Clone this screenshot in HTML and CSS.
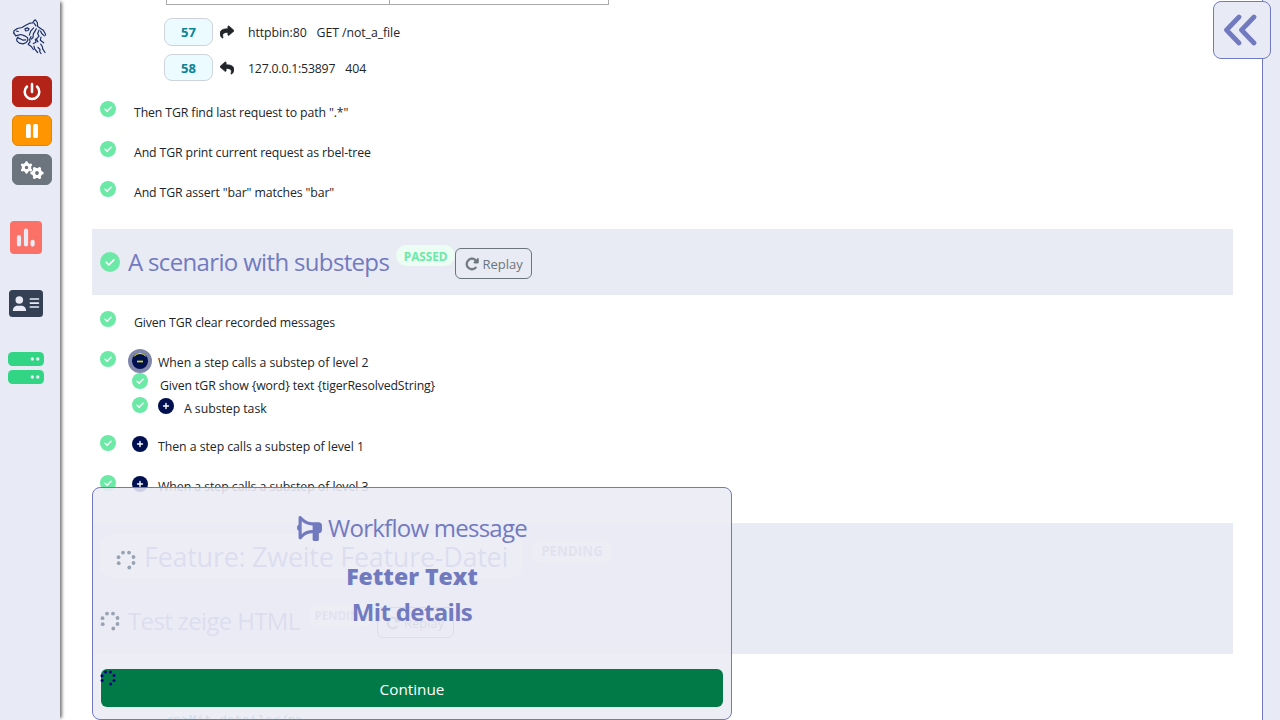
FILE: index.html
```html
<!DOCTYPE html>
<html lang="en">
<head>
<meta charset="utf-8">
<title>Workflow UI</title>
<link rel="stylesheet" href="styles.css">
</head>
<body>
<svg class="defs" width="0" height="0">
  <symbol id="check" viewBox="0 0 16 16"><circle cx="8" cy="8" r="8" fill="#6ce9a6"/><path d="M5 8.2l2.1 2.1 4-4" fill="none" stroke="#fff" stroke-width="1.4" stroke-linecap="round" stroke-linejoin="round"/></symbol>
  <symbol id="plus" viewBox="0 0 16 16"><circle cx="8" cy="8" r="8" fill="#000f50"/><path d="M5.500 8h5M8 5.500v5" stroke="#fff" stroke-width="1.4" stroke-linecap="round"/></symbol>
  <symbol id="share" viewBox="0 0 512 512"><path d="M503.691 189.836L327.687 37.851C312.281 24.546 288 35.347 288 56.015v80.053C127.371 137.907 0 170.1 0 322.326c0 61.441 39.581 122.309 83.333 154.132 13.653 9.931 33.111-2.533 28.077-18.631C66.066 312.814 132.917 274.316 288 272.085V360c0 20.7 24.3 31.453 39.687 18.164l176.004-152c11.071-9.562 11.086-26.753 0-36.328z" fill="currentColor" stroke="currentColor" stroke-width="24"/></symbol>
  <symbol id="redo" viewBox="0 0 512 512"><path d="M463.5 224H472c13.3 0 24-10.7 24-24V72c0-9.7-5.8-18.5-14.8-22.2s-19.3-1.7-26.2 5.2L413.4 96.6c-87.6-86.5-228.7-86.2-315.8 1c-87.5 87.5-87.5 229.3 0 316.8s229.3 87.5 316.8 0c12.5-12.5 12.5-32.8 0-45.3s-32.8-12.5-45.3 0c-62.5 62.5-163.8 62.5-226.3 0s-62.5-163.8 0-226.3c62.2-62.2 162.7-62.5 225.3-1L327 183c-6.9 6.9-8.9 17.2-5.2 26.2s12.5 14.8 22.2 14.8H463.5z" fill="currentColor" stroke="currentColor" stroke-width="16"/></symbol>
  <symbol id="spin" viewBox="0 0 20 20"><g fill="currentColor"><circle cx="7" cy="2.6" r="1.9"/><circle cx="13" cy="2.6" r="1.9"/><circle cx="2.5" cy="7.2" r="1.9"/><circle cx="17.5" cy="7" r="1.9"/><circle cx="2.7" cy="13.2" r="1.9"/><circle cx="17.5" cy="13" r="1.9"/><circle cx="13.3" cy="17.5" r="1.9"/></g></symbol>
  <symbol id="gear" viewBox="-10 -10 20 20"><circle r="5" fill="none" stroke="#fff" stroke-width="4.6"/><g stroke="#fff" stroke-width="4.4" stroke-linecap="round"><path d="M0-7.4V-6M0 7.4V6M6.4-3.7L5.2-3M-6.4 3.7L-5.2 3M6.4 3.7L5.2 3M-6.4-3.7L-5.2-3"/></g></symbol>
</svg>

<div class="app">
  <nav class="sidebar">
    <svg class="logo" viewBox="36 56 105 110" fill="none" stroke="#1d3068" stroke-width="3.6" stroke-linejoin="round" stroke-linecap="round">
      <path d="M41 101l1-7 10-7 14-3 10-6 13-7 9-1 4-6 4-3 6 8 1 12 12 8 5 3 5 9 2 6"/>
      <path d="M102 71l6 8M42 101l5 8 8-2 8-2 11 4 8 5 2 7-5 8-10 4-11-2-7-6-1-6 4-6"/>
      <path d="M54 115l7 3 8 4 8-1M50 95l5 1"/>
      <path d="M75 88l7-3 5 3-3 5-7 1-2-4M101 85l-9 10-4 12M109 88l-9 15-1 11-5 5M117 92l-4 10 4 8-8 9 5 8M122 95l3 7 8 7M93 111l-4 9 1 7-5 7M106 119l2 9-8 4M123 113l-2 9 10 8"/>
      <path d="M85 135l9 6 6 9M102 140l2 8 9 11M114 144l6 6-1 6 4 6M122 134l5 7 1 7 7 11"/>
    </svg>
    <button class="tool tool-quit"><svg width="20" height="20" viewBox="0 0 20 20"><path d="M5 4.5a7.3 7.3 0 1 0 10 0M10 1.9v8" fill="none" stroke="#fff" stroke-width="2.5" stroke-linecap="round"/></svg></button>
    <button class="tool tool-pause"><svg width="12" height="14" viewBox="0 0 12 14"><rect width="4.8" height="14" rx="1.6" fill="#fff"/><rect x="7.2" width="4.8" height="14" rx="1.6" fill="#fff"/></svg></button>
    <button class="tool tool-gears"><svg width="24" height="20" viewBox="0 0 24 20"><use href="#gear" x="0" y="1" width="13" height="13"/><use href="#gear" x="10" y="6" width="14" height="14" transform="rotate(30 17 13)"/></svg></button>
    <svg class="nav-chart" width="32" height="33" viewBox="0 0 32 33"><rect width="32" height="33" rx="4" fill="#fb7168"/><path d="M9 16v7.5M16 9.5v14M22.6 20.8v2.8" stroke="#e8ebf5" stroke-width="4.2" stroke-linecap="round"/></svg>
    <svg class="nav-card" width="34" height="27" viewBox="0 0 34 27"><rect width="34" height="27" rx="3.5" fill="#344054"/><g fill="#e8ebf5"><circle cx="10.3" cy="10" r="3.8"/><path d="M3.8 21c0-3.5 2.2-5.3 5-5.3h3.3c2.8 0 5 1.8 5 5.3z"/></g><path d="M21.3 9h8.2M21.3 13.1h8.2M21.3 17h8.2" stroke="#e8ebf5" stroke-width="1.6" stroke-linecap="round"/></svg>
    <svg class="nav-server" width="36" height="32" viewBox="0 0 36 32"><rect width="36" height="14" rx="4.5" fill="#32d583"/><rect y="18" width="36" height="14" rx="4.5" fill="#32d583"/><g fill="#e8ebf5"><circle cx="24.3" cy="7" r="1.7"/><circle cx="29.8" cy="7" r="1.7"/><circle cx="24.3" cy="25" r="1.7"/><circle cx="29.8" cy="25" r="1.7"/></g></svg>
  </nav>

  <main class="content">
    <div class="table-end"><span></span></div>
    <div class="message first"><b class="seq">57</b><svg class="dir"><use href="#share"/></svg><span class="host">httpbin:80</span><span class="req">GET /not_a_file</span></div>
    <div class="message"><b class="seq">58</b><svg class="dir reply"><use href="#share"/></svg><span class="host host-ip">127.0.0.1:53897</span><span>404</span></div>

    <div class="steps">
      <div class="step"><svg class="dot"><use href="#check"/></svg><span>Then TGR find last request to path ".*"</span></div>
      <div class="step"><svg class="dot"><use href="#check"/></svg><span>And TGR print current request as rbel-tree</span></div>
      <div class="step"><svg class="dot"><use href="#check"/></svg><span>And TGR assert "bar" matches "bar"</span></div>
    </div>

    <section class="scenario">
      <svg class="dot-lg"><use href="#check"/></svg>
      <h2 class="scenario-title">A scenario with substeps</h2>
      <b class="badge">PASSED</b>
      <button class="replay"><svg width="14" height="14"><use href="#redo"/></svg><span>Replay</span></button>
    </section>

    <div class="steps after">
      <div class="step"><svg class="dot"><use href="#check"/></svg><span>Given TGR clear recorded messages</span></div>
      <div class="step parent"><svg class="dot"><use href="#check"/></svg><svg class="toggle open" viewBox="0 0 24 24"><circle cx="12" cy="12" r="12" fill="#8087ab"/><circle cx="12" cy="12" r="8" fill="#000f50"/><path d="M6.2 7.2a7.5 7.5 0 0 1 11.6 0" stroke="#ff0" fill="none"/><path d="M9 12.5h6" stroke="#d8d820" stroke-width="1.7"/></svg><span>When a step calls a substep of level 2</span></div>
      <div class="substep"><svg class="dot"><use href="#check"/></svg><span>Given tGR show {word} text {tigerResolvedString}</span></div>
      <div class="substep nested"><svg class="dot"><use href="#check"/></svg><svg class="toggle"><use href="#plus"/></svg><span>A substep task</span></div>
      <div class="step parent"><svg class="dot"><use href="#check"/></svg><svg class="toggle"><use href="#plus"/></svg><span>Then a step calls a substep of level 1</span></div>
      <div class="step parent"><svg class="dot"><use href="#check"/></svg><svg class="toggle"><use href="#plus"/></svg><span>When a step calls a substep of level 3</span></div>
    </div>

    <section class="pending">
      <div class="feature">
        <div class="feature-box"><svg class="spinner"><use href="#spin"/></svg><h1 class="feature-title">Feature: Zweite Feature-Datei</h1></div>
        <b class="badge badge-pending">PENDING</b>
      </div>
      <div class="pending-row">
        <svg class="spinner"><use href="#spin"/></svg>
        <h2 class="pending-title">Test zeige HTML</h2>
        <b class="badge badge-pending small">PENDING</b>
        <button class="replay"><svg width="14" height="14"><use href="#redo"/></svg><span>Replay</span></button>
      </div>
    </section>
    <svg class="spinner spinner-step"><use href="#spin"/></svg>
    <pre class="code">&lt;p&gt;Mit details&lt;/p&gt;</pre>
  </main>

  <aside class="log-panel"></aside>
</div>

<button class="expand"><svg width="34" height="32" viewBox="0 0 34 32"><path d="M16 3L3.500 16 16 29M31 3L18.500 16 31 29" fill="none" stroke="#727abf" stroke-width="4.700" stroke-linecap="round" stroke-linejoin="round"/></svg></button>

<div class="dialog">
  <h2 class="dialog-title"><svg width="25" height="25" viewBox="0 0 512 512"><path transform="translate(512 0) scale(-1 1)" fill="currentColor" d="M480 32c0-12.900-7.800-24.600-19.800-29.600s-25.700-2.200-34.900 6.900L381.700 53c-48 48-113.100 75-181 75H64c-35.300 0-64 28.700-64 64v96c0 35.300 28.700 64 64 64v128c0 17.700 14.300 32 32 32h64c17.700 0 32-14.300 32-32V352h8.700c67.900 0 133 27 181 75l43.600 43.600c9.200 9.200 22.900 11.900 34.900 6.900s19.800-16.600 19.800-29.600V300.400c18.600-8.800 32-32.500 32-60.400s-13.400-51.600-32-60.400V32zm-64 76.700V371.300C357.200 317.800 280.500 288 200.700 288H192V192h8.700c79.800 0 156.500-29.800 215.300-83.300z"/></svg><span>Workflow message</span></h2>
  <p class="dialog-strong"><span>Fetter Text</span></p>
  <p class="dialog-detail"><span>Mit details</span></p>
  <button class="continue">Continue</button>
</div>
</body>
</html>
```
FILE: styles.css
```css
* { box-sizing: border-box; }
body { margin: 0; height: 720px; overflow: hidden; background: #fff; color: #212529; font: 12.3px/20px "Open Sans", "Noto Sans", sans-serif; }
h1, h2, p, pre { margin: 0; font-weight: 400; }
button { font: inherit; padding: 0; cursor: pointer; }
svg { flex: none; display: block; }
span, h1, h2, b { white-space: nowrap; }
.defs { position: absolute; }
.app { display: flex; height: 720px; }

.sidebar { flex: none; width: 60px; background: #e8ebf5; box-shadow: 4px 0 3px -2px #777; display: flex; flex-direction: column; align-items: flex-start; padding: 18px 0 0 12px; z-index: 1; }
.logo { width: 35px; height: 37px; margin-bottom: 21px; }
.tool { width: 40px; height: 31px; border-radius: 6px; border: 1px solid; display: flex; align-items: center; justify-content: center; margin-bottom: 8px; }
.tool-quit { background: #b42318; border-color: #b42318; }
.tool-pause { background: #ff9500; border-color: #e58600; }
.tool-gears { background: #6c757d; border-color: #6c757d; margin-bottom: 36px; }
.nav-chart { margin: 0 0 36px -2px; }
.nav-card { margin: 0 0 35px -3px; }
.nav-server { margin-left: -4px; }

.content { flex: 1; padding-left: 32px; overflow: hidden; display: flex; flex-direction: column; align-items: flex-start; }
.table-end { flex: none; width: 443px; height: 5px; margin: 0 0 13px 74px; border: 1px solid #aaa; border-top: 0; display: flex; }
.table-end span { width: 223px; border-right: 1px solid #aaa; }
.message { flex: none; display: flex; align-items: center; height: 28px; margin: 0 0 8px 72px; }
.message + .message { height: 27px; margin-bottom: 11px; }
.message span { padding-top: 2px; letter-spacing: -.07px; }
.seq { width: 49px; height: 100%; border: 1px solid #ced4da; border-radius: 8px; background: #ecfbff; color: #078596; font-size: 13px; text-align: center; line-height: 26px; }
.dir { width: 14px; height: 14px; margin: 0 14px 0 7px; }
.reply { transform: scaleX(-1); }
.message .host { margin-right: 10px; }
.message .host-ip { letter-spacing: -.2px; }

.steps { flex: none; width: 1141px; letter-spacing: -.12px; }
.step { display: flex; height: 40px; padding: 10px 0 0 8px; }
.step span { padding-top: 1px; }
.step .dot { margin: -1px 18px 0 0; }
.dot, .toggle { width: 16px; height: 16px; }
.step.parent { letter-spacing: -.05px; }
.step.parent .dot { margin-right: 16px; }
.step .toggle { margin-right: 10px; }
.step .toggle.open { width: 24px; height: 24px; margin: -3px 6px 0 -4px; }
.substep { display: flex; height: 23px; padding: 2px 0 0 40px; }
.substep .dot { margin: -3px 12px 0 0; }
.nested { margin-bottom: 6px; letter-spacing: -.05px; }
.nested .dot { margin: -2px 10px 0 0; }
.nested .toggle { margin: -1px 10px 0 0; }
.after { padding-top: 7px; }
.after .substep:nth-child(3) { margin-top: -8px; }

.scenario { flex: none; width: 1141px; height: 66px; margin-top: 17px; padding: 0 8px; background: #e8ebf4; display: flex; align-items: center; }
.dot-lg { width: 20px; height: 20px; margin-right: 8px; }
.scenario-title, .pending-title { color: #727abf; font-size: 24px; line-height: 32px; letter-spacing: -.66px; }
.badge { height: 21px; width: 59px; margin: -13px 0 0 7px; border-radius: 11px; background: #ecfdf3; color: #6ce9a6; font-size: 11.8px; line-height: 23px; text-align: center; }
.replay { width: 77px; height: 31px; margin-top: 3px; border: 1px solid #6c757d; border-radius: 6px; background: transparent; color: #6c757d; font-size: 13px; display: flex; align-items: center; justify-content: center; gap: 4px; }

.pending { flex: none; width: 1141px; height: 131px; margin-top: 17px; padding: 11px 8px 0; background: #e8ebf4; }
.feature { display: flex; align-items: flex-start; }
.feature-box { width: 423px; height: 44px; padding: 2px 16px 0; display: flex; align-items: center; background: #fff; border-radius: 14px; }
.feature-title { font-size: 27px; line-height: 36px; color: #727abf; letter-spacing: -.28px; }
.spinner { width: 20px; height: 20px; margin-right: 8px; color: #98a2b3; position: relative; z-index: 3; }
.feature .spinner { margin-top: 5px; }
.badge-pending { width: 80px; background: #f9fafb; color: #98a2b3; margin: 6px 0 0 9px; font-size: 13.4px; height: 23px; }
.pending-row { display: flex; align-items: center; margin-top: 25px; height: 36px; }
.badge-pending.small { width: 65px; font-size: 11.5px; margin: -12px 3px 0 9px; }
.spinner-step { width: 16px; height: 16px; margin: 16px 0 0 8px; color: #000080; }
.code { font: 13px/20px "Liberation Mono", monospace; color: #078596; margin: 25px 0 0 74px; letter-spacing: -.2px; }

.log-panel { flex: none; width: 18px; background: #e8ebf5; border-left: 1px solid #727abf; }
.expand { position: absolute; left: 1213px; top: 1px; width: 58px; height: 58px; border: 1px solid #727abf; border-radius: 8px; background: #e8ebf5; display: flex; align-items: center; justify-content: center; padding-right: 4px; }

.dialog { position: absolute; z-index: 2; left: 92px; top: 487px; width: 640px; height: 233px; padding: 23px 8px 0; border: 1px solid #727abf; border-radius: 8px; background: rgba(234, 234, 245, .88); color: #727abf; text-align: center; }
.dialog-title { display: flex; justify-content: center; align-items: center; gap: 6px; height: 34px; font-size: 24px; letter-spacing: -.75px; }
.dialog-strong { height: 36px; margin-top: 13px; font-size: 23px; line-height: 36px; font-weight: 800; }
.dialog-detail { height: 36px; font-size: 24px; line-height: 36px; font-weight: 700; letter-spacing: -.65px; }
.continue { display: block; width: 622px; height: 38px; margin-top: 39px; border: 0; border-radius: 6px; background: #027a48; color: #fff; font-size: 15.3px; line-height: 40px; }
```
